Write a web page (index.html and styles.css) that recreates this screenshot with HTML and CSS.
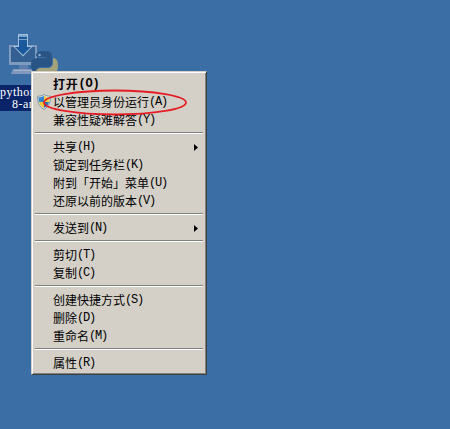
FILE: index.html
```html
<!DOCTYPE html>
<html lang="zh-CN">
<head>
<meta charset="utf-8">
<title>桌面</title>
<link rel="stylesheet" href="styles.css">
</head>
<body>
<main class="desktop">
  <div class="shortcut">
    <svg class="shortcut-icon" width="52" height="48" viewBox="0 0 52 48">
      <path d="M1 12h28v20H1z" fill="#7f9abf"/>
      <path d="M3 14h24v15H3z" fill="#345f92"/>
      <path d="M11 32h9v4h-9z" fill="#5c7fac"/>
      <path d="M5 36h19l2 5H3z" fill="#8198bc"/>
      <path d="M6 37h17v1H6z" fill="#a3b3cc"/>
      <path d="M10 1h10v12h5L15 23.500 5 13h5z" fill="#a5c0dc"/>
      <path d="M11 2h8v12h4l-8 8-8-8h4z" fill="#19599c"/>
      <path d="M11 2h8v2h-8zM11 6h8v1h-8z" fill="#7fa4ca"/>
      <path d="M28 23c0-4 3-5 8-5s8 1 8 5v7c0 3-2 4-5 4h-6c-3 0-4 2-4 5h-2c-3-1-4-3-4-7 0-5 3-7 7-7h8v-1h-8z" fill="#285585"/>
      <path d="M45 25c4 0 5 4 5 8 0 6-3 8-7 8h-7v1h7c0 5-3 6-8 6-5 0-7-2-7-5v-4c0-3 2-4 5-4h6c4 0 6-2 6-6z" fill="#a3a27a"/>
      <circle cx="31.500" cy="22" r="1.300" fill="#86a7c7"/>
    </svg>
    <div class="shortcut-label">python<br><span class="label-second">8-am</span></div>
  </div>

  <nav class="menu">
    <div class="item bold">打开<span class="key">(O)</span></div>
    <div class="item">以管理员身份运行<span class="key">(A)</span></div>
    <div class="item">兼容性疑难解答<span class="key">(Y)</span></div>
    <hr>
    <div class="item">共享<span class="key">(H)</span><svg class="arrow" width="4" height="7" viewBox="0 0 4 7"><path d="M0 0l4 3.500-4 3.500z"/></svg></div>
    <div class="item">锁定到任务栏<span class="key">(K)</span></div>
    <div class="item">附到「开始」菜单<span class="key">(U)</span></div>
    <div class="item">还原以前的版本<span class="key">(V)</span></div>
    <hr>
    <div class="item">发送到<span class="key">(N)</span><svg class="arrow" width="4" height="7" viewBox="0 0 4 7"><path d="M0 0l4 3.500-4 3.500z"/></svg></div>
    <hr>
    <div class="item">剪切<span class="key">(T)</span></div>
    <div class="item">复制<span class="key">(C)</span></div>
    <hr>
    <div class="item">创建快捷方式<span class="key">(S)</span></div>
    <div class="item">删除<span class="key">(D)</span></div>
    <div class="item">重命名<span class="key">(M)</span></div>
    <hr>
    <div class="item">属性<span class="key">(R)</span></div>
  </nav>

  <svg class="shield" width="14" height="16" viewBox="0 0 14 16">
    <path d="M7 .5c2 1.300 4 1.600 6.500 1.700 0 6-1 10-6.500 13.300C1.500 12.200.5 8.200.5 2.200 3 2.100 5 1.800 7 .5z" fill="#d9e2e8" stroke="#8798a3"/>
    <path d="M7 2v6H2C1.700 6.500 1.500 5 1.500 3.300 3.500 3.200 5.500 3 7 2z" fill="#3286cc"/>
    <path d="M7 2c1.500 1 3.500 1.200 5.500 1.300 0 1.700-.2 3.200-.5 4.700H7z" fill="#f0cf42"/>
    <path d="M2 8h5v6C4 12.500 2.600 10.500 2 8z" fill="#f3c532"/>
    <path d="M7 8h5c-.6 2.500-2 4.500-5 6z" fill="#2774bd"/>
  </svg>
  <svg class="ring" width="150" height="32" viewBox="0 0 150 32"><ellipse cx="74" cy="14.500" rx="71" ry="12"/></svg>
</main>
</body>
</html>
```
FILE: styles.css
```css
* { box-sizing: border-box; }

body { margin: 0; }

.desktop {
  position: relative;
  width: 450px;
  height: 429px;
  overflow: hidden;
  background: #3a6ea5;
  font: 12px/18px "Noto Sans CJK SC", sans-serif;
}

.shortcut {
  position: absolute;
  left: 0;
  top: 33px;
  width: 70px;
}

.shortcut-icon {
  display: block;
  margin-left: 8px;
}

.shortcut-label {
  width: 31px;
  margin-top: 4px;
  height: 26px;
  padding-top: 1px;
  overflow: hidden;
  background: #0a246a;
  color: #fff;
  font: 12px/12px "Liberation Serif", serif;
  letter-spacing: 0.5px;
  white-space: nowrap;
}

.label-second { margin-left: 12px; }

.menu {
  position: absolute;
  left: 31px;
  top: 71px;
  width: 176px;
  height: 304px;
  padding: 3px 2px 2px;
  border: 1px solid;
  border-color: #d4d0c8 #404040 #404040 #d4d0c8;
  box-shadow: inset 1px 1px #fff, inset -1px -1px #808080;
  background: #d4d0c8;
  color: #000;
}

.item {
  display: flex;
  align-items: center;
  height: 18px;
  padding-left: 19px;
  white-space: nowrap;
}

.key {
  font: 12px/18px "Liberation Mono", monospace;
  letter-spacing: -1.2px;
}

.bold {
  font-weight: 700;
  letter-spacing: 0.8px;
}

.bold .key {
  font-weight: 700;
  letter-spacing: -0.2px;
}

.arrow {
  margin-left: auto;
  margin-right: 6px;
}

.menu hr {
  height: 2px;
  margin: 3px 1px 4px;
  border: 0;
  border-top: 1px solid #808080;
  border-bottom: 1px solid #fff;
}

.shield {
  position: absolute;
  left: 37px;
  top: 94px;
}

.ring {
  position: absolute;
  left: 41px;
  top: 88px;
  fill: none;
  stroke: #e51c23;
  stroke-width: 1.8;
}
```
